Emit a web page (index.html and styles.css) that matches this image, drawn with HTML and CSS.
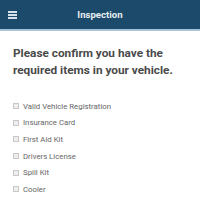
FILE: index.html
```html
<!DOCTYPE html>
<html lang="en">
<head>
    <meta charset="UTF-8">
    <title>Inspection</title>
    <link rel="stylesheet" href="styles.css">
</head>
<body>
    <div class="topbar">
        <div class="menu-icon">
            <span></span>
            <span></span>
            <span></span>
        </div>
        <div class="title">Inspection</div>
    </div>

    <div class="content">
        <h2>Please confirm you have the required items in your vehicle.</h2>

        <ul class="checklist">
            <li><span class="box"></span>Valid Vehicle Registration</li>
            <li><span class="box"></span>Insurance Card</li>
            <li><span class="box"></span>First Aid Kit</li>
            <li><span class="box"></span>Drivers License</li>
            <li><span class="box"></span>Spill Kit</li>
            <li><span class="box"></span>Cooler</li>
        </ul>
    </div>
</body>
</html>
```

FILE: styles.css
```css
body {
    margin: 0;
    font-family: Roboto, "Liberation Sans", sans-serif;
    background: #ffffff;
    color: #444;
}

.topbar {
    height: 29px;
    background: #1b4a6b;
    border-bottom: 2px solid #a9c3d6;
    display: flex;
    align-items: center;
    position: relative;
}

.menu-icon {
    width: 9px;
    margin-left: 8px;
    display: flex;
    flex-direction: column;
    gap: 1px;
}

.menu-icon span {
    display: block;
    height: 2px;
    background: #d8e2ea;
}

.title {
    position: absolute;
    left: 0;
    right: 0;
    text-align: center;
    color: #e8eef3;
    font-size: 9.6px;
    font-weight: bold;
}

.content {
    padding: 14px 13px 0;
}

.content h2 {
    margin: 0 0 19px;
    max-width: 165px;
    font-size: 11.8px;
    line-height: 17px;
    color: #4a4a4a;
}

.checklist {
    list-style: none;
    margin: 0;
    padding: 0;
}

.checklist li {
    display: flex;
    align-items: center;
    height: 16.6px;
    font-size: 7.8px;
    color: #666;
}

.box {
    width: 4px;
    height: 4px;
    border: 1px solid #c8c8c8;
    background: #eee;
    margin-right: 4px;
}
```
